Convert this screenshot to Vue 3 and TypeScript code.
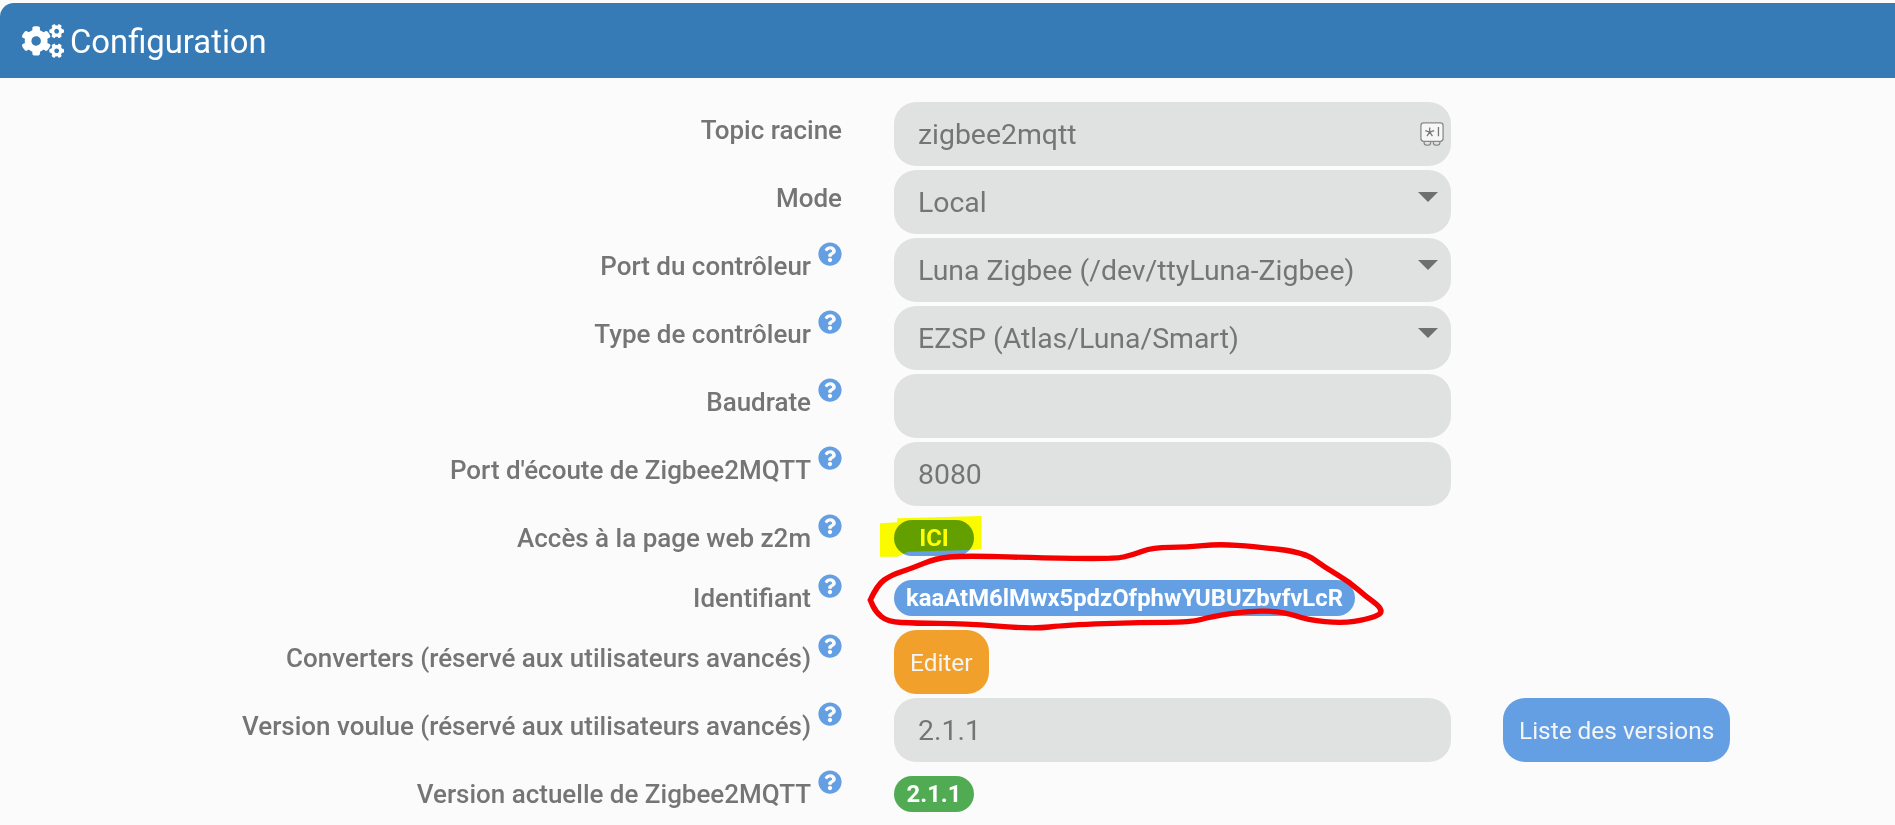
<script setup lang="ts">
interface Row {
  label: string
  help: boolean
  kind: 'input' | 'select' | 'pill' | 'button'
  value?: string
  secret?: boolean
  tone?: string
  side?: string
}

const rows: Row[] = [
  { label: 'Topic racine', help: false, kind: 'input', value: 'zigbee2mqtt', secret: true },
  { label: 'Mode', help: false, kind: 'select', value: 'Local' },
  { label: 'Port du contrôleur', help: true, kind: 'select', value: 'Luna Zigbee (/dev/ttyLuna-Zigbee)' },
  { label: 'Type de contrôleur', help: true, kind: 'select', value: 'EZSP (Atlas/Luna/Smart)' },
  { label: 'Baudrate', help: true, kind: 'input', value: '' },
  { label: "Port d'écoute de Zigbee2MQTT", help: true, kind: 'input', value: '8080' },
  { label: 'Accès à la page web z2m', help: true, kind: 'pill', value: 'ICI', tone: 'blue' },
  { label: 'Identifiant', help: true, kind: 'pill', value: 'kaaAtM6lMwx5pdzOfphwYUBUZbvfvLcR', tone: 'blue' },
  { label: 'Converters (réservé aux utilisateurs avancés)', help: true, kind: 'button', value: 'Editer' },
  { label: 'Version voulue (réservé aux utilisateurs avancés)', help: true, kind: 'input', value: '2.1.1', side: 'Liste des versions' },
  { label: 'Version actuelle de Zigbee2MQTT', help: true, kind: 'pill', value: '2.1.1', tone: 'green' },
]

const scribble: [number, number][] = [
  [30, 330], [50, 285], [90, 255], [150, 235], [220, 205], [300, 197], [500, 203], [740, 207],
  [790, 195], [850, 172], [950, 172], [1040, 162], [1150, 170], [1290, 187], [1350, 232],
  [1420, 275], [1470, 320], [1510, 350], [1515, 372], [1470, 388], [1400, 400], [1300, 390],
  [1230, 365], [1130, 362], [1020, 380], [960, 397], [820, 397], [600, 405], [500, 417],
  [300, 400], [160, 400], [80, 395], [45, 365], [30, 330],
]

const scribblePath = scribble.reduce((d, p, i, all) => {
  if (i === 0) return `M${p[0]} ${p[1]}`
  if (i === all.length - 1) return `${d} L${p[0]} ${p[1]}`
  const n = all[i + 1]
  return `${d} Q${p[0]} ${p[1]} ${(p[0] + n[0]) / 2} ${(p[1] + n[1]) / 2}`
}, '')

const cogs =
  'M512.1 191l-8.2 14.3c-3 5.3-9.4 7.5-15.1 5.4-11.8-4.4-22.6-10.7-32.1-18.6-4.6-3.8-5.8-10.5-2.8-15.7l8.2-14.3c-6.9-8-12.3-17.3-15.9-27.4h-16.5c-6 0-11.2-4.3-12.2-10.3-2-12-2.1-24.6 0-37.1 1-6 6.2-10.4 12.2-10.4h16.5c3.6-10.1 9-19.4 15.9-27.4l-8.2-14.3c-3-5.2-1.9-11.9 2.8-15.7 9.5-7.9 20.4-14.2 32.1-18.6 5.7-2.1 12.1.1 15.1 5.4l8.2 14.3c10.5-1.9 21.2-1.9 31.7 0L552 6.3c3-5.3 9.4-7.5 15.1-5.4 11.8 4.4 22.6 10.7 32.1 18.6 4.6 3.8 5.8 10.5 2.8 15.7l-8.2 14.3c6.9 8 12.3 17.3 15.9 27.4h16.5c6 0 11.2 4.3 12.2 10.3 2 12 2.1 24.6 0 37.1-1 6-6.2 10.4-12.2 10.4h-16.5c-3.6 10.1-9 19.4-15.9 27.4l8.2 14.3c3 5.2 1.9 11.9-2.8 15.7-9.5 7.9-20.4 14.2-32.1 18.6-5.7 2.1-12.1-.1-15.1-5.4l-8.2-14.3c-10.4 1.9-21.2 1.9-31.7 0zm-10.5-58.8c38.5 29.6 82.4-14.3 52.8-52.8-38.5-29.7-82.4 14.3-52.8 52.8zM386.3 286.1l33.7 16.8c10.1 5.8 14.5 18.1 10.5 29.1-8.9 24.2-26.4 46.4-42.6 65.8-7.4 8.9-20.2 11.1-30.3 5.3l-29.1-16.8c-16 13.7-34.6 24.6-54.9 31.7v33.6c0 11.6-8.3 21.6-19.7 23.6-24.6 4.2-50.4 4.4-75.9 0-11.5-2-20-11.9-20-23.6V418c-20.3-7.2-38.9-18-54.9-31.7L74 403c-10 5.8-22.9 3.6-30.3-5.3-16.2-19.4-33.3-41.6-42.2-65.7-4-10.9.4-23.2 10.5-29.1l33.3-16.8c-3.9-20.9-3.9-42.4 0-63.4L12 205.8c-10.1-5.8-14.6-18.1-10.5-29 8.9-24.2 26-46.4 42.2-65.8 7.4-8.9 20.2-11.1 30.3-5.3l29.1 16.8c16-13.7 34.6-24.6 54.9-31.7V57.1c0-11.5 8.2-21.5 19.6-23.5 24.6-4.2 50.5-4.4 76-.1 11.5 2 20 11.9 20 23.6v33.6c20.3 7.2 38.9 18 54.9 31.7l29.1-16.8c10-5.8 22.9-3.6 30.3 5.3 16.2 19.4 33.2 41.6 42.1 65.8 4 10.9.1 23.2-10 29.1l-33.7 16.8c3.9 21 3.9 42.5 0 63.5zm-117.6 21.1c59.2-77-28.7-164.9-105.7-105.7-59.2 77 28.7 164.9 105.7 105.7zm243.4 182.7l-8.2 14.3c-3 5.3-9.4 7.5-15.1 5.4-11.8-4.4-22.6-10.7-32.1-18.6-4.6-3.8-5.8-10.5-2.8-15.7l8.2-14.3c-6.9-8-12.3-17.3-15.9-27.4h-16.5c-6 0-11.2-4.3-12.2-10.3-2-12-2.1-24.6 0-37.1 1-6 6.2-10.4 12.2-10.4h16.5c3.6-10.1 9-19.4 15.9-27.4l-8.2-14.3c-3-5.2-1.9-11.9 2.8-15.7 9.5-7.9 20.4-14.2 32.1-18.6 5.7-2.1 12.1.1 15.1 5.4l8.2 14.3c10.5-1.9 21.2-1.9 31.7 0l8.2-14.3c3-5.3 9.4-7.5 15.1-5.4 11.8 4.4 22.6 10.7 32.1 18.6 4.6 3.8 5.8 10.5 2.8 15.7l-8.2 14.3c6.9 8 12.3 17.3 15.9 27.4h16.5c6 0 11.2 4.3 12.2 10.3 2 12 2.1 24.6 0 37.1-1 6-6.2 10.4-12.2 10.4h-16.5c-3.6 10.1-9 19.4-15.9 27.4l8.2 14.3c3 5.2 1.9 11.9-2.8 15.7-9.5 7.9-20.4 14.2-32.1 18.6-5.7 2.1-12.1-.1-15.1-5.4l-8.2-14.3c-10.4 1.9-21.2 1.9-31.7 0zM501.6 431c38.5 29.6 82.4-14.3 52.8-52.8-38.5-29.6-82.4 14.3-52.8 52.8z'
const question =
  'M504 256c0 136.997-111.043 248-248 248S8 392.997 8 256C8 119.083 119.043 8 256 8s248 111.083 248 248zM262.655 90c-54.497 0-89.255 22.957-116.549 63.758-3.536 5.286-2.353 12.415 2.715 16.258l34.699 26.31c5.205 3.947 12.621 3.008 16.665-2.122 17.864-22.658 30.113-35.797 57.303-35.797 20.429 0 45.698 13.148 45.698 32.958 0 14.976-12.363 22.667-32.534 33.976C247.128 238.528 216 254.941 216 296v4c0 6.627 5.373 12 12 12h56c6.627 0 12-5.373 12-12v-1.333c0-28.462 83.186-29.647 83.186-106.667 0-58.002-60.165-102-116.531-102zM256 338c-25.365 0-46 20.635-46 46 0 25.364 20.635 46 46 46s46-20.636 46-46c0-25.365-20.635-46-46-46z'
</script>

<template>
  <main class="page">
    <header class="panel-head">
      <svg class="cogs" viewBox="0 0 640 512" aria-hidden="true"><path :d="cogs" fill="currentColor" /></svg>
      <h1>Configuration</h1>
    </header>

    <section class="form">
      <div v-for="row in rows" :key="row.label" class="row" :class="'row-' + row.kind">
        <div class="label">
          <span class="label-text">{{ row.label }}</span>
          <svg v-if="row.help" class="help" viewBox="0 0 512 512" aria-hidden="true"><path :d="question" fill="currentColor" /></svg>
        </div>

        <div class="control">
          <div v-if="row.kind === 'input' || row.kind === 'select'" class="field">
            <span>{{ row.value }}</span>
            <svg v-if="row.secret" class="vault" viewBox="0 0 26 26" aria-hidden="true">
              <rect x="1" y="1" width="24" height="20" rx="3" fill="#f7f7f7" stroke="#8a8a8a" stroke-width="1.4" />
              <path d="M4.5 21v1.5a2.5 2.5 0 0 0 2.5 2.5h2a2.5 2.5 0 0 0 2.5-2.5V21M14.5 21v1.5a2.5 2.5 0 0 0 2.5 2.5h2a2.5 2.5 0 0 0 2.5-2.5V21" fill="none" stroke="#8a8a8a" stroke-width="1.4" />
              <path d="M10.5 6v5M10.5 11l4.8-1.6M10.5 11l-4.8-1.6M10.5 11l3 4.2M10.5 11l-3 4.2M20 5.5v10" fill="none" stroke="#777" stroke-width="1.4" />
            </svg>
            <i v-if="row.kind === 'select'" class="caret"></i>
          </div>
          <span v-else-if="row.kind === 'pill'" class="pill" :class="row.tone">{{ row.value }}</span>
          <button v-else type="button" class="btn orange">{{ row.value }}</button>
        </div>

        <button v-if="row.side" type="button" class="btn blue side">{{ row.side }}</button>
      </div>
    </section>

    <div class="marks" aria-hidden="true">
      <svg class="mark-svg" viewBox="0 0 1568 510" preserveAspectRatio="none">
        <polygon class="highlight" points="58,100 108,97 108,85 353,78 353,178 320,180 140,185 108,200 58,200" />
        <path class="scribble" :d="scribblePath" />
      </svg>
    </div>
  </main>
</template>

<style>
html, body { margin: 0; background: #fbfbfb; }
</style>

<style scoped>
.page {
  position: relative;
  width: 1895px;
  height: 825px;
  overflow: hidden;
  box-sizing: border-box;
  padding-top: 3px;
  background: #fbfbfb;
  font-family: Roboto, "Liberation Sans", sans-serif;
  color: #757575;
}
.panel-head {
  display: flex;
  align-items: center;
  height: 75px;
  box-sizing: border-box;
  padding-left: 22px;
  gap: 6px;
  background: #367ab6;
  color: #fff;
  border-top-left-radius: 14px;
}
.panel-head h1 { margin: 0; font-size: 32.8px; font-weight: 400; line-height: 1; padding-top: 4px; }
.cogs { width: 42px; height: 34px; }

.form { padding-top: 24px; }
.row { display: flex; height: 64px; margin-bottom: 4px; }
.row-pill { height: 56px; }
.label {
  width: 894px;
  flex: none;
  box-sizing: border-box;
  padding: 0 52px 0 0;
  display: flex;
  justify-content: flex-end;
  align-items: flex-start;
  gap: 7px;
}
.label-text { font-size: 25.98px; font-weight: 500; line-height: 34px; padding-top: 11px; white-space: nowrap; }
.help { width: 24px; height: 24px; margin-top: 4px; color: #649fe4; flex: none; }

.control { width: 557px; flex: none; }
.field {
  position: relative;
  height: 64px;
  box-sizing: border-box;
  padding: 4px 24px 0;
  line-height: 58px;
  font-size: 28.4px;
  background: #e0e2e1;
  border-radius: 22px;
}
.vault { position: absolute; right: 7px; top: 20px; width: 24px; height: 24px; }
.caret {
  position: absolute;
  right: 13px;
  top: 22px;
  border: 10px solid transparent;
  border-top: 10px solid #6f6f6f;
  border-bottom: 0;
}
.pill {
  display: inline-block;
  box-sizing: border-box;
  min-width: 80px;
  margin-top: 10px;
  height: 36px;
  line-height: 36px;
  padding: 0 12px;
  text-align: center;
  font-size: 23.85px;
  font-weight: 700;
  color: #fff;
  border-radius: 18px;
  white-space: nowrap;
}
.pill.blue { background: #649fe4; }
.pill.green { background: #50ab52; }
.btn {
  height: 64px;
  border: 0;
  border-radius: 22px;
  color: #f5f5f5;
  font: 400 24.4px Roboto, "Liberation Sans", sans-serif;
  padding: 0 16px;
}
.btn.orange { background: #f1a12b; }
.btn.blue { background: #649fe4; }
.side { margin-left: 52px; }

.marks { position: absolute; left: 860px; top: 490px; width: 540px; height: 170px; pointer-events: none; }
.mark-svg { display: block; width: 100%; height: 100%; overflow: visible; }
.highlight { fill: #ffff00; mix-blend-mode: multiply; }
.scribble { fill: none; stroke: #f50000; stroke-width: 16; stroke-linecap: round; stroke-linejoin: round; }
</style>
